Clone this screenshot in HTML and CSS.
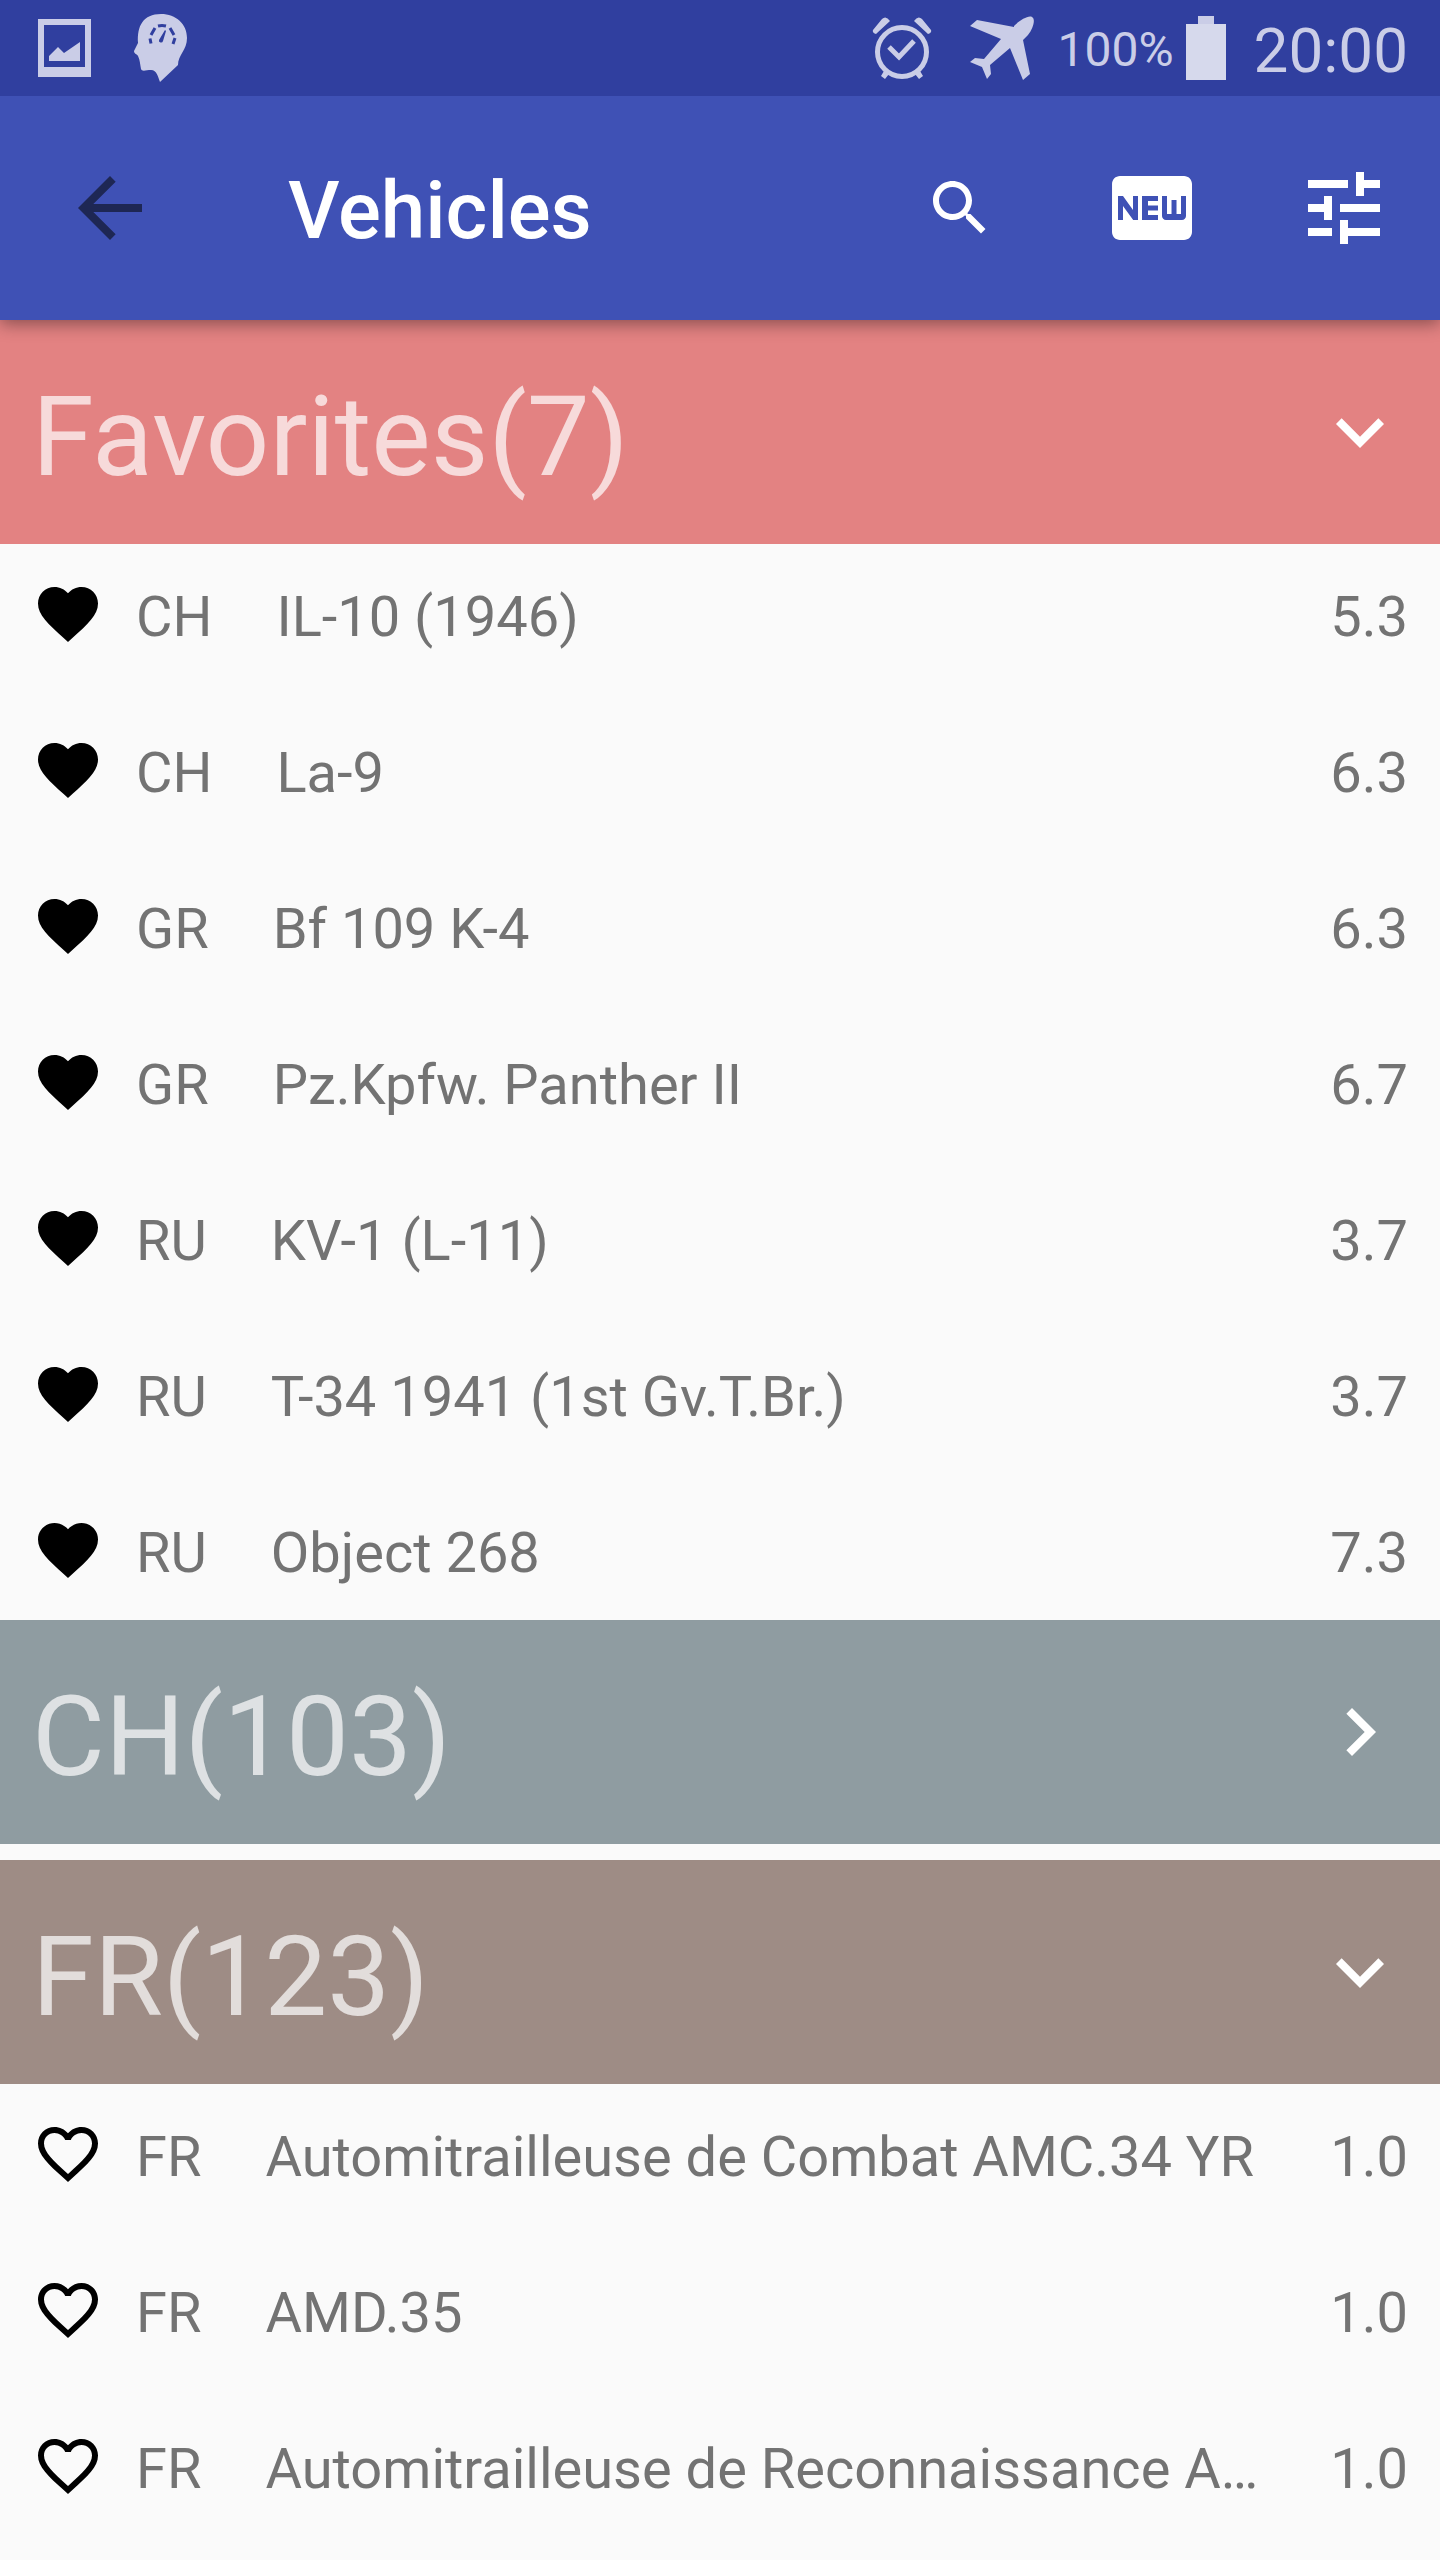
FILE: index.html
```html
<!DOCTYPE html>
<html lang="en">
<head>
<meta charset="utf-8">
<meta name="viewport" content="width=device-width, initial-scale=1">
<title>Vehicles</title>
<link rel="stylesheet" href="styles.css">
</head>
<body>
<svg class="defs" aria-hidden="true">
  <symbol id="heart" viewBox="0 0 24 24"><path d="M12 21.35l-1.45-1.32C5.4 15.36 2 12.28 2 8.5 2 5.42 4.42 3 7.5 3c1.74 0 3.41.81 4.5 2.09C13.09 3.81 14.76 3 16.5 3 19.58 3 22 5.42 22 8.5c0 3.78-3.4 6.86-8.55 11.54L12 21.35z"/></symbol>
  <symbol id="heart-outline" viewBox="0 0 24 24"><path d="M16.5 3c-1.74 0-3.41.81-4.5 2.09C10.91 3.81 9.24 3 7.5 3 4.42 3 2 5.42 2 8.5c0 3.78 3.4 6.86 8.55 11.54L12 21.35l1.45-1.32C18.6 15.36 22 12.28 22 8.5 22 5.42 19.58 3 16.5 3zm-4.4 15.55l-.1.1-.1-.1C7.14 14.24 4 11.39 4 8.5 4 6.5 5.5 5 7.5 5c1.54 0 3.04.99 3.57 2.36h1.87C13.46 5.99 14.96 5 16.5 5c2 0 3.5 1.5 3.5 3.5 0 2.89-3.14 5.74-7.9 10.05z"/></symbol>
  <symbol id="chevron-down" viewBox="0 0 24 24"><path d="M7.41 8.59L12 13.17l4.590-4.580L18 10l-6 6-6-6z"/></symbol>
  <symbol id="chevron-right" viewBox="0 0 24 24"><path d="M8.59 16.59L13.17 12 8.59 7.41 10 6l6 6-6 6z"/></symbol>
</svg>

<header class="top">
  <div class="status">
    <div class="status-group notices">
      <svg class="icon-photo" viewBox="0 0 53 58"><path fill-rule="evenodd" d="M0 0h53v58H0zM6 6v42h41V6zM11 42v-5l9-9 6 6 16-11v19z"/></svg>
      <svg class="icon-head" viewBox="0 0 53 68"><path d="M27 0C42 0 53 10 53 24c0 12-9 17-9 27L26 68c-2-5-3-12-9-12-5 0-9 2-10-1C6 50 6 46 4 42 3 40 0 40 0 37l4-8C3 12 9 0 27 0z"/><path class="gauge" d="M17 29.500l-1-5M17 21l4-7M24 12q4-1 8 0M36 14l4 7M41 24l-2 6"/><path class="needle" d="M31 16l1 1-3 10a2 2 0 0 1-4-1z"/></svg>
    </div>
    <div class="status-group">
      <svg class="icon-alarm" viewBox="0 0 60 62"><circle cx="30" cy="35" r="24.500" fill="none" stroke="currentColor" stroke-width="5"/><path d="M1 13 10 2q4-4 8 2L4 17q-4-1-3-4zM59 13 50 2q-4-4-8 2l14 13q4-1 3-4zM12 54l-3 5 4 3 4-5zM48 54l3 5-4 3-4-5z"/><path fill="none" stroke="currentColor" stroke-width="5" d="M17 30l10 10 15-16"/></svg>
      <svg class="icon-plane" viewBox="0 0 64 64"><path d="M44 10C49 5 58-1 62 1s1 12-4 18l-5 5 7 34-7 6-13-32-20 17 1 9-4 5-5-12-12-5 5-4 9 1 17-20L0 10l7-6 37 7z"/></svg>
      <span class="percent">100%</span>
      <svg class="icon-battery" viewBox="0 0 40 64"><path class="tip" d="M12 0h16v8H12z"/><path d="M0 8h40v56H0z"/></svg>
      <time class="clock">20:00</time>
    </div>
  </div>
  <div class="appbar">
    <button class="tool back" aria-label="Back"><svg viewBox="0 0 24 24"><path d="M20 11H7.830l5.590-5.590L12 4l-8 8 8 8 1.410-1.410L7.830 13H20z"/></svg></button>
    <h1>Vehicles</h1>
    <div class="tools">
      <button class="tool search" aria-label="Search"><svg viewBox="0 0 24 24"><path d="M15.5 14h-.79l-.28-.27C15.410 12.590 16 11.110 16 9.500 16 5.910 13.090 3 9.500 3S3 5.910 3 9.500 5.910 16 9.500 16c1.610 0 3.090-.59 4.230-1.570l.27.28v.79l5 4.990L20.490 19l-4.990-5zm-6 0C7.010 14 5 11.990 5 9.500S7.010 5 9.500 5 14 7.010 14 9.500 11.990 14 9.500 14z"/></svg></button>
      <button class="tool" aria-label="New"><svg viewBox="0 0 24 24"><path d="M20 4H4c-1.110 0-1.990.89-1.990 2L2 18c0 1.110.89 2 2 2h16c1.110 0 2-.89 2-2V6c0-1.110-.89-2-2-2zM8.500 15H7.300l-2.550-3.500V15H3.500V9h1.250l2.500 3.500V9H8.500v6zm5-4.740H11v1.120h2.500v1.260H11v1.110h2.500V15h-4V9h4v1.260zm7 3.740c0 .55-.45 1-1 1h-4c-.55 0-1-.45-1-1V9h1.250v4.510h1.130V9.990h1.250v3.510h1.120V9h1.250v5z"/></svg></button>
      <button class="tool" aria-label="Filter"><svg viewBox="0 0 24 24"><path d="M3 17v2h6v-2H3zM3 5v2h10V5H3zm10 16v-2h8v-2h-8v-2h-2v6h2zM7 9v2H3v2h4v2h2V9H7zm14 4v-2H11v2h10zm-6-4h2V7h4V5h-4V3h-2v6z"/></svg></button>
    </div>
  </div>
</header>

<main class="groups">
  <section>
    <h2><button class="group favorites" aria-expanded="true"><span>Favorites(7)</span><svg class="chevron"><use href="#chevron-down"/></svg></button></h2>
    <ul class="rows">
      <li class="row"><button class="fav" aria-label="Remove favorite"><svg><use href="#heart"/></svg></button><span>CH</span><span class="name">IL-10 (1946)</span><span>5.3</span></li>
      <li class="row"><button class="fav" aria-label="Remove favorite"><svg><use href="#heart"/></svg></button><span>CH</span><span class="name">La-9</span><span>6.3</span></li>
      <li class="row"><button class="fav" aria-label="Remove favorite"><svg><use href="#heart"/></svg></button><span>GR</span><span class="name">Bf 109 K-4</span><span>6.3</span></li>
      <li class="row"><button class="fav" aria-label="Remove favorite"><svg><use href="#heart"/></svg></button><span>GR</span><span class="name">Pz.Kpfw. Panther II</span><span>6.7</span></li>
      <li class="row"><button class="fav" aria-label="Remove favorite"><svg><use href="#heart"/></svg></button><span>RU</span><span class="name">KV-1 (L-11)</span><span>3.7</span></li>
      <li class="row"><button class="fav" aria-label="Remove favorite"><svg><use href="#heart"/></svg></button><span>RU</span><span class="name">T-34 1941 (1st Gv.T.Br.)</span><span>3.7</span></li>
      <li class="row"><button class="fav" aria-label="Remove favorite"><svg><use href="#heart"/></svg></button><span>RU</span><span class="name">Object 268</span><span>7.3</span></li>
    </ul>
  </section>
  <section class="collapsed">
    <h2><button class="group ch" aria-expanded="false"><span>CH(103)</span><svg class="chevron"><use href="#chevron-right"/></svg></button></h2>
  </section>
  <section>
    <h2><button class="group fr" aria-expanded="true"><span>FR(123)</span><svg class="chevron"><use href="#chevron-down"/></svg></button></h2>
    <ul class="rows">
      <li class="row"><button class="fav" aria-label="Add favorite"><svg><use href="#heart-outline"/></svg></button><span>FR</span><span class="name">Automitrailleuse de Combat AMC.34 YR</span><span>1.0</span></li>
      <li class="row"><button class="fav" aria-label="Add favorite"><svg><use href="#heart-outline"/></svg></button><span>FR</span><span class="name">AMD.35</span><span>1.0</span></li>
      <li class="row"><button class="fav" aria-label="Add favorite"><svg><use href="#heart-outline"/></svg></button><span>FR</span><span class="name">Automitrailleuse de Reconnaissance A…</span><span>1.0</span></li>
    </ul>
  </section>
</main>
</body>
</html>
```

FILE: styles.css
```css
* { box-sizing: border-box; }
body { margin: 0; background: #fafafa; font-family: Roboto, "Liberation Sans", sans-serif; color: #737373; }
h1, h2, ul { margin: 0; padding: 0; font-weight: inherit; list-style: none; }
button { border: 0; padding: 0; background: none; color: inherit; font: inherit; display: flex; align-items: center; cursor: pointer; }
svg { display: block; fill: currentColor; flex: none; }
.defs { position: absolute; width: 0; height: 0; }

.top { position: relative; box-shadow: 0 4px 16px rgba(0, 0, 0, 0.4); }
.status { display: flex; justify-content: space-between; align-items: center; height: 96px; padding: 0 32px 0 38px; background: #303f9f; color: #cacde7; }
.status-group { display: flex; align-items: center; }
.notices { gap: 43px; }
.icon-photo { width: 53px; height: 58px; }
.icon-head { width: 53px; height: 68px; }
.gauge { fill: none; stroke: #303f9f; stroke-width: 3px; }
.needle { fill: #303f9f; }
.icon-alarm { width: 60px; height: 62px; margin-right: 38px; }
.icon-plane { width: 64px; height: 64px; margin-right: 24px; }
.percent { padding-top: 4px; font-size: 48px; line-height: 64px; }
.icon-battery { width: 40px; height: 64px; margin: 0 28px 0 12px; color: #d6d9ec; }
.tip { fill: #cacde7; }
.clock { padding-top: 6px; font-size: 62px; line-height: 80px; }

.appbar { display: flex; align-items: center; height: 224px; padding: 0 48px 0 62px; background: #3f51b5; color: #fff; }
.tool { width: 96px; height: 96px; justify-content: center; }
.tool svg { width: 96px; height: 96px; }
.back { color: #1e2754; }
h1 { flex: 1; margin-left: 130px; padding-top: 6px; font-size: 80px; line-height: 96px; font-weight: 500; }
.tools { display: flex; align-items: center; gap: 96px; }
.search svg { width: 72px; height: 72px; }

.group { width: 100%; height: 224px; padding: 0 32px; justify-content: space-between; font-size: 112px; line-height: 136px; color: rgba(255, 255, 255, 0.7); }
.group span { padding-top: 10px; }
.chevron { width: 96px; height: 96px; color: #fff; }
.favorites { background: #e38282; }
.ch { background: #8f9ca1; }
.fr { background: #9e8c85; }
.collapsed { margin-bottom: 16px; }

.rows { display: flex; flex-direction: column; gap: 16px; }
.row { display: flex; align-items: center; height: 140px; padding: 0 32px; font-size: 56px; line-height: 72px; }
.row span { padding-top: 6px; }
.fav { margin-right: 32px; color: #000; }
.fav svg { width: 72px; height: 72px; }
.name { flex: 1; min-width: 0; margin: 0 64px; overflow: hidden; white-space: nowrap; text-overflow: ellipsis; }
```
